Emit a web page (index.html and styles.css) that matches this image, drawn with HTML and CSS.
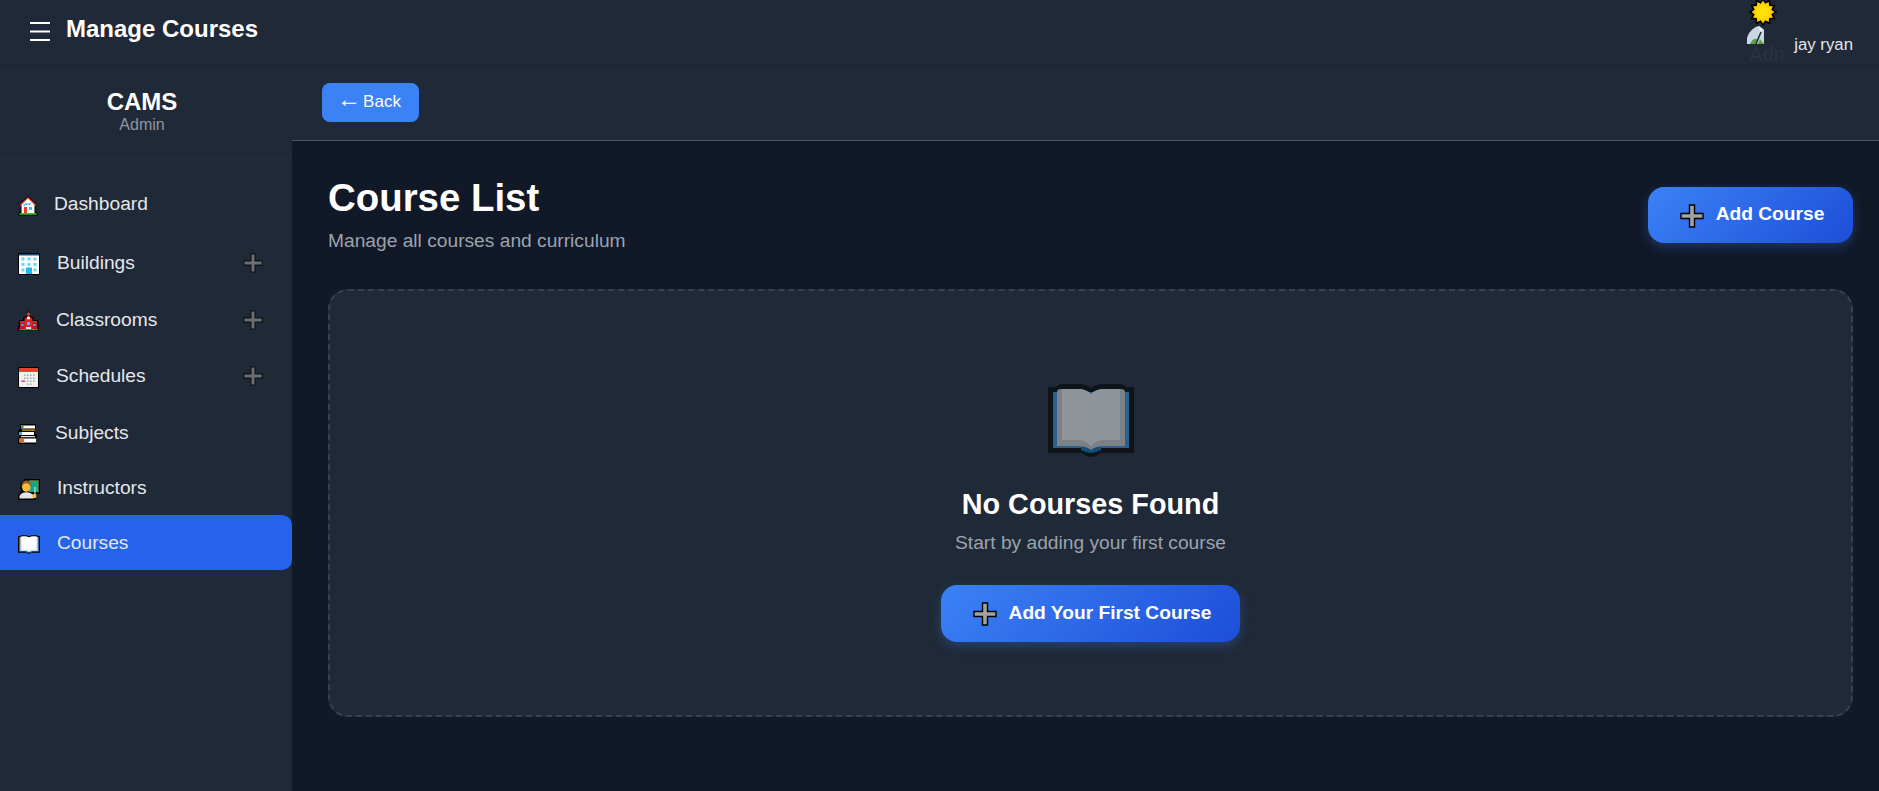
FILE: index.html
```html
<!DOCTYPE html>
<html lang="en">
<head>
<meta charset="utf-8">
<title>Manage Courses</title>
<link rel="stylesheet" href="styles.css">
</head>
<body>
<div class="app">
  <header class="topbar">
    <div class="topbar-left">
      <svg class="burger" width="20" height="19" viewBox="0 0 20 19"><path d="M0 1h20M0 9.500h20M0 18h20" stroke="#fff" stroke-width="2"/></svg>
      <h1 class="page-title">Manage Courses</h1>
    </div>
    <div class="user">
      <svg class="sun" width="28" height="28" viewBox="0 0 26 26"><polygon points="25,13 21.700,15.300 23.400,19 19.400,19.400 19,23.400 15.300,21.700 13,25 10.700,21.700 7,23.400 6.600,19.400 2.600,19 4.300,15.300 1,13 4.300,10.700 2.600,7 6.600,6.600 7,2.600 10.700,4.300 13,1 15.300,4.300 19,2.600 19.400,6.600 23.400,7 21.700,10.700" fill="#ffd000" stroke="#000" stroke-width="1.600"/><circle cx="13" cy="13" r="6.500" fill="#ffe000"/></svg>
      <div class="avatar">
        <svg class="broken" width="19" height="18" viewBox="0 0 19 18"><path d="M1 18V12C3 5 8 1 13 0L18 4V18Z" fill="#c9d6e6"/><path d="M13 0L18 4 14 5Z" fill="#eef1f4"/><path d="M4 18C6 13 9 12 12 13L10 18Z" fill="#5aa63c"/><path d="M14 13L18 18H12Z" fill="#5aa63c"/><path d="M15 6L10 18" stroke="#1f2937" stroke-width="1.500"/></svg>
        <span class="alt">Adm</span>
      </div>
      <span class="user-name">jay ryan</span>
    </div>
  </header>
  <div class="layout">
    <aside class="sidebar">
      <div class="brand">
        <div class="brand-name">CAMS</div>
        <div class="brand-role">Admin</div>
      </div>
      <nav class="nav">
        <a class="nav-item tight">
          <svg width="20" height="21" viewBox="0 0 20 21"><path d="M.5 20.500V18L2.500 16V10H.5L10 .8 19.500 10H17.500V16L19.500 18V20.500Z" fill="#000"/><path d="M2 10L10 2.500 18 10H16.500V18H3.500V10Z" fill="#fff"/><path d="M2 10.500L10 2.500 18 10.500" fill="none" stroke="#e0341f" stroke-width="1.200"/><path d="M1.500 18h17v1.800h-17z" fill="#35b82e"/><path d="M6 12h3v6H6z" fill="#ef3b24"/><path d="M7.500 8h2v2h-2zM10.500 8h2v2h-2zM11 12h3v3h-3zM5.500 9h1.500v2H5.500z" fill="#3cc0f0"/></svg>
          <span class="nav-text">Dashboard</span>
        </a>
        <a class="nav-item gap-4">
          <svg width="22" height="22" viewBox="0 0 22 22"><rect x=".5" y=".5" width="21" height="21" fill="#fff" stroke="#000"/><path d="M1 1h20v1.500H1z" fill="#0b4f8f"/><path d="M3.500 4.500h3v3h-3zM9.500 4.500h3v3h-3zM15.500 4.500h3v3h-3zM3.500 10h3v3h-3zM9.500 10h3v3h-3zM15.500 10h3v3h-3zM3.500 15.500h3v3h-3zM15.500 15.500h3v3h-3z" fill="#6fd3f7"/><path d="M8 14.500h6V21H8z" fill="#27b5ee"/></svg>
          <span class="nav-text">Buildings</span>
          <svg class="toggle" width="20" height="20" viewBox="0 0 24 24"><path d="M9.500 1h5v8.500H23v5h-8.500V23h-5v-8.500H1v-5h8.500Z" fill="#9d9d9d" stroke="#000" stroke-width="1.400"/></svg>
        </a>
        <a class="nav-item gap-2">
          <svg width="21" height="20" viewBox="0 0 21 20"><path d="M0 20V16L1 9H5V7L8 5V3L10.500 0 13 3V5L16 7V9H20L21 16V20Z" fill="#000"/><path d="M2 10H19V18H2Z" fill="#c8102e"/><path d="M6.500 7.500L10.500 4.500 14.500 7.500V18H6.500Z" fill="#e0202f"/><path d="M2 10h4.500v1.500H2zM14.500 10H19v1.500h-4.500z" fill="#8a5a2b"/><path d="M8.500 2.800L10.500 1 12.500 2.800V4.500H8.500Z" fill="#a55a30"/><circle cx="10.500" cy="7" r="1.500" fill="#fff"/><path d="M3.500 13h2v2h-2zM15.500 13h2v2h-2zM9 11h3v3H9z" fill="#35c6f0"/><path d="M1 18h19v1.300H1z" fill="#2f9c35"/><path d="M8 16h5v2H8z" fill="#e9e9e9"/></svg>
          <span class="nav-text">Classrooms</span>
          <svg class="toggle" width="20" height="20" viewBox="0 0 24 24"><path d="M9.500 1h5v8.500H23v5h-8.500V23h-5v-8.500H1v-5h8.500Z" fill="#9d9d9d" stroke="#000" stroke-width="1.400"/></svg>
        </a>
        <a class="nav-item gap-1">
          <svg width="21" height="21" viewBox="0 0 21 21"><rect x=".5" y=".5" width="20" height="20" fill="#f0f0f0" stroke="#000"/><path d="M1 1h19v4H1z" fill="#e8402a"/><path d="M6 7.500h1.500V9H6zM9 7.500h1.500V9H9zM12 7.500h1.500V9H12zM15 7.500h1.500V9H15zM6 10.500h1.500V12H6zM9 10.500h1.500V12H9zM12 10.500h1.500V12H12zM15 10.500h1.500V12H15zM6 13.500h1.500V15H6zM9 13.500h1.500V15H9zM12 13.500h1.500V15H12zM15 13.500h1.500V15H15zM9 16.500h1.500V18H9zM12 16.500h1.500V18H12z" fill="#aaa"/><path d="M3.500 13.500h3V15h-3z" fill="#e8402a"/></svg>
          <span class="nav-text">Schedules</span>
          <svg class="toggle" width="20" height="20" viewBox="0 0 24 24"><path d="M9.500 1h5v8.500H23v5h-8.500V23h-5v-8.500H1v-5h8.500Z" fill="#9d9d9d" stroke="#000" stroke-width="1.400"/></svg>
        </a>
        <a class="nav-item gap-2">
          <svg width="20" height="20" viewBox="0 0 20 20"><path d="M2 0H18V5H17V10H19V14H18V20H0V14H1V10H0V6H2Z" fill="#000"/><path d="M3 1.500H17V4.500H3Z" fill="#fff"/><path d="M3 1.500H5.500V4.500H3Z" fill="#1fa82e"/><path d="M4 5.500H17V6.700H4Z" fill="#f3a81c"/><path d="M1.500 8H16V11H1.500Z" fill="#fff"/><path d="M1.500 8H4V11H1.500Z" fill="#4ea6e6"/><path d="M3 12H17V13.200H3Z" fill="#e8e8e8"/><path d="M1.500 14.500H18V18.500H1.500Z" fill="#fff"/><path d="M1.500 14.500H6V18.500H1.500Z" fill="#f0641e"/></svg>
          <span class="nav-text">Subjects</span>
        </a>
        <a class="nav-item">
          <svg width="22" height="21" viewBox="0 0 22 21"><path d="M7 0H22V15H18V21H0V17L2.500 13.500V5Z" fill="#000"/><path d="M11 1.500H20.500V13H11Z" fill="#0da78e"/><path d="M11 1.500H20.500V2.500H11zM19.500 2H20.500V13.500H19.500z" fill="#b07c22"/><path d="M3.500 8.500C3.500 3.500 5.500 1.500 8.500 1.500 11.500 1.500 13 3.500 13 8.500Z" fill="#9a5a22"/><circle cx="8.300" cy="8.500" r="4.200" fill="#f6bd3a"/><path d="M1.500 19.500V17C2.500 14.500 5 13.200 8.500 13.200 12 13.200 14 14.500 15.500 16.500V19.500Z" fill="#e4e4e4"/><path d="M16.500 8h1v9h-1z" fill="#f0f0f0"/><circle cx="16.300" cy="17" r="2.200" fill="#f6bd3a"/></svg>
          <span class="nav-text">Instructors</span>
        </a>
        <a class="nav-item active">
          <svg width="22" height="19" viewBox="0 0 86 73"><path d="M0 3H8Q10 0 14 0H30Q38 0 43 4 48 0 56 0H72Q76 0 78 3H86V69H52Q48 73 43 73 38 73 34 69H0Z" fill="#000"/><path d="M5 8H81V64H53V68H33V64H5Z" fill="#3597e9"/><path d="M9 8Q9 5 13 5H30Q38 5 43 10 48 5 56 5H73Q77 5 77 8V62H56Q48 62 43 66 38 62 30 62H9Z" fill="#d8d8d8"/><path d="M14 5H30Q38 5 43 10 48 5 56 5H72V56H56Q48 56 43 62 38 56 30 56H14Z" fill="#fff"/></svg>
          <span class="nav-text">Courses</span>
        </a>
      </nav>
    </aside>
    <div class="content">
      <div class="backbar"><a class="back"><span class="back-arrow">←</span> Back</a></div>
      <main class="main">
        <div class="list-head">
          <div>
            <h2 class="list-title">Course List</h2>
            <p class="list-sub">Manage all courses and curriculum</p>
          </div>
          <a class="btn btn-top">
            <svg class="btn-plus" width="24" height="24" viewBox="0 0 24 24"><path d="M9.500 1h5v8.500H23v5h-8.500V23h-5v-8.500H1v-5h8.500Z" fill="#a3a3a3" stroke="#000" stroke-width="1.400"/></svg>
            Add Course
          </a>
        </div>
        <section class="empty">
          <svg class="empty-book" width="86" height="73" viewBox="0 0 86 73"><path d="M0 3H8Q10 0 14 0H30Q38 0 43 4 48 0 56 0H72Q76 0 78 3H86V69H52Q48 73 43 73 38 73 34 69H0Z" fill="#000"/><path d="M5 8H81V64H5Z" fill="#3597e9"/><path d="M33 63H53V66Q48 69 43 69 38 69 33 66Z" fill="#0a70c0"/><path d="M9 8Q9 5 13 5H30Q38 5 43 10 48 5 56 5H73Q77 5 77 8V62H56Q48 62 43 66 38 62 30 62H9Z" fill="#d8d8d8"/><path d="M14 5H30Q38 5 43 10 48 5 56 5H72V56H56Q48 56 43 62 38 56 30 56H14Z" fill="#fff"/></svg>
          <h3 class="empty-title">No Courses Found</h3>
          <p class="empty-sub">Start by adding your first course</p>
          <a class="btn btn-empty">
            <svg class="btn-plus" width="24" height="24" viewBox="0 0 24 24"><path d="M9.500 1h5v8.500H23v5h-8.500V23h-5v-8.500H1v-5h8.500Z" fill="#a3a3a3" stroke="#000" stroke-width="1.400"/></svg>
            Add Your First Course
          </a>
        </section>
      </main>
    </div>
  </div>
</div>
</body>
</html>
```
FILE: styles.css
```css
* { box-sizing: border-box; }
html, body { margin: 0; height: 100%; }
body {
  font-family: "Liberation Sans", Arial, sans-serif;
  background: #111827;
  color: #fff;
  overflow: hidden;
}
h1, h2, h3, p { margin: 0; }
.app { display: flex; flex-direction: column; height: 791px; }

.topbar {
  height: 64px;
  flex: none;
  background: #1f2937;
  display: flex;
  justify-content: space-between;
  padding: 0 26px 0 30px;
  position: relative;
  z-index: 2;
  box-shadow: 0 1px 3px rgba(0, 0, 0, .12);
}
.topbar-left { display: flex; align-items: center; gap: 16px; height: 58px; }
.burger { display: block; margin-top: 4px; }
.page-title { font-size: 24px; font-weight: 700; line-height: 1; }
.user { display: flex; align-items: flex-start; padding-top: 26px; position: relative; }
.sun { position: absolute; left: 3px; top: -2px; }
.avatar { width: 38px; height: 38px; overflow: hidden; position: relative; color: #2a3340; font-size: 20px; }
.broken { display: block; }
.alt { display: block; margin: 0 0 0 3px; line-height: 20px; white-space: nowrap; }
.user-name { font-size: 16.8px; color: #e5e7eb; margin: 10px 0 0 10px; line-height: 18px; }

.layout { flex: 1; display: flex; min-height: 0; }
.sidebar { width: 292px; flex: none; background: #1f2937; }
.brand {
  height: 95px;
  padding: 26px 8px 0 0;
  text-align: center;
  border-bottom: 1px solid #263140;
}
.brand-name { font-size: 24px; font-weight: 700; line-height: 24px; }
.brand-role { font-size: 16px; color: #8f96a3; line-height: 20px; margin-top: 1px; }

.nav { display: flex; flex-direction: column; padding-top: 17px; }
.nav-item {
  height: 55px;
  display: flex;
  align-items: center;
  gap: 17px;
  padding: 0 29px 0 18px;
  color: #e5e7eb;
  font-size: 19.2px;
}
.nav-item.tight { gap: 16px; }
.nav-item svg { flex: none; }
.nav-item > svg:first-child { margin-top: 3px; }
.nav-text { line-height: 22px; margin-top: 0; }
.gap-4 { margin-top: 4px; }
.gap-2 { margin-top: 2px; }
.gap-1 { margin-top: 1px; }
.toggle { margin-left: auto; opacity: .6; }
.nav-item > .toggle { margin-top: 1px; }
.active { background: #2563eb; border-radius: 0 10px 10px 0; }

.content { flex: 1; display: flex; flex-direction: column; min-width: 0; }
.backbar { height: 77px; flex: none; background: #1f2937; border-bottom: 1px solid #4b5563; padding: 19px 30px; }
.back {
  display: flex;
  align-items: center;
  justify-content: center;
  gap: 2px;
  width: 97px;
  height: 39px;
  padding: 0 3px 2px 0;
  border-radius: 8px;
  background: #3b82f6;
  color: #fff;
  font-size: 17px;
}
.back-arrow { font-size: 24px; line-height: 20px; margin-top: -5px; }
.main { flex: 1; background: #111827; padding: 34px 26px 0 36px; }
.list-head { display: flex; justify-content: space-between; align-items: flex-start; }
.list-title { font-size: 38.4px; line-height: 46px; font-weight: 700; }
.list-sub { font-size: 19.2px; line-height: 24px; color: #9ca3af; margin-top: 8px; }
.btn {
  display: flex;
  align-items: center;
  justify-content: center;
  gap: 12px;
  border-radius: 16px;
  background: linear-gradient(135deg, #3b82f6, #1d4ed8);
  box-shadow: 0 4px 12px rgba(59, 130, 246, .3);
  color: #fff;
  font-size: 19.2px;
  font-weight: 700;
}
.btn-plus { margin: 3px 0 0 3px; flex: none; }
.btn-top { width: 205px; height: 56px; margin-top: 12px; padding-bottom: 2px; }
.btn-empty { width: 299px; height: 57px; padding-bottom: 2px; }
.empty {
  height: 428px;
  margin-top: 36px;
  background: #1f2937;
  border: 2px dashed #374151;
  border-radius: 20px;
  display: flex;
  flex-direction: column;
  align-items: center;
  padding-top: 93px;
}
.empty-book { opacity: .5; display: block; }
.empty-title { font-size: 28.8px; line-height: 36px; font-weight: 700; margin-top: 29px; }
.empty-sub { font-size: 19.2px; line-height: 22px; color: #9ca3af; margin-top: 10px; }
.btn-empty { margin-top: 31px; }
```
